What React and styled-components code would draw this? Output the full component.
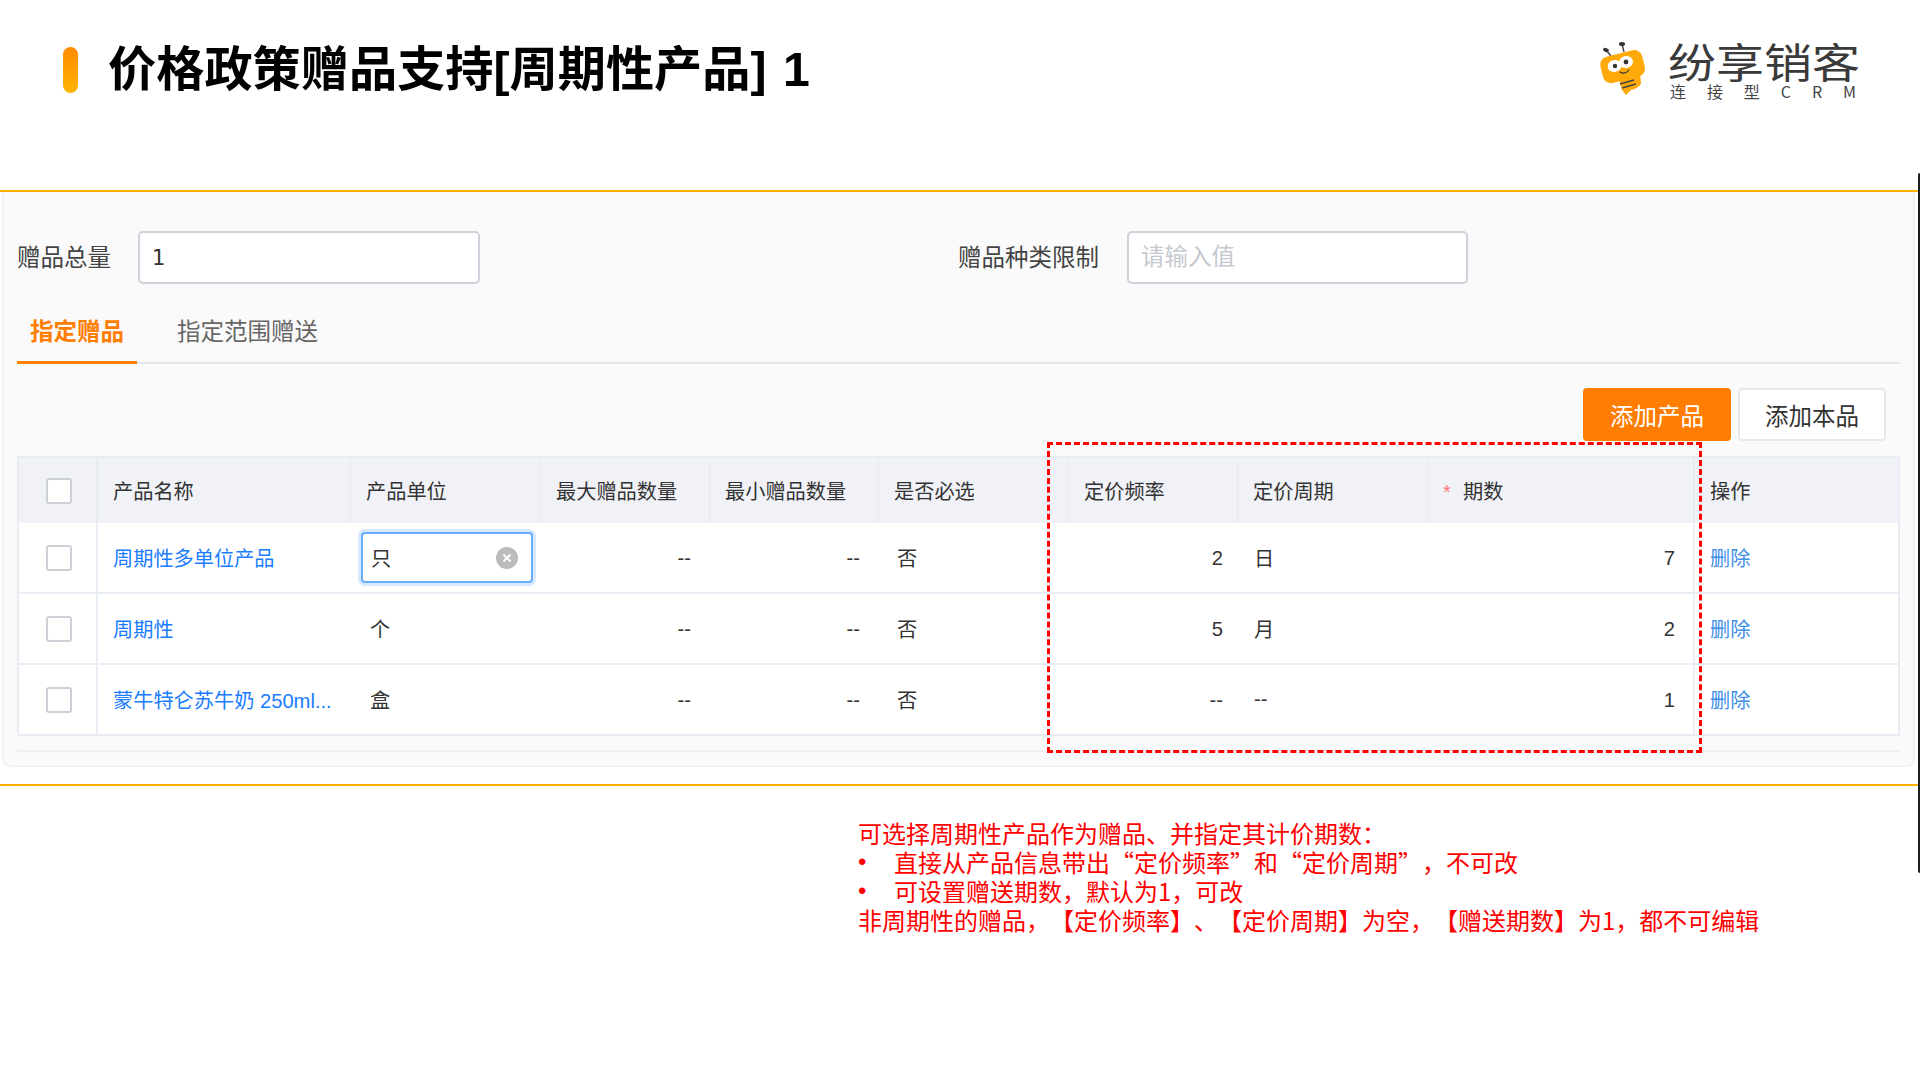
import React from "react";
import styled, { createGlobalStyle } from "styled-components";

const sans = `"Liberation Sans", "Noto Sans CJK SC", sans-serif`;
const cjk = `"Noto Sans CJK SC", "Liberation Sans", sans-serif`;

const Global = createGlobalStyle`
  html, body { margin: 0; padding: 0; background: #fff; }
  * { box-sizing: border-box; }
`;

const Page = styled.div`
  position: relative;
  width: 1920px;
  height: 1080px;
  overflow: hidden;
  background: #fff;
  font-family: ${sans};
  color: #333;
  text-spacing-trim: space-all;
`;

const Header = styled.header`
  height: 190px;
  padding: 43px 62px 0 63px;
  display: flex;
  justify-content: space-between;
  align-items: flex-start;
`;

const TitleGroup = styled.div`
  display: flex;
  align-items: center;
  gap: 30px;
  height: 46px;
  margin-top: 4px;
`;

const Accent = styled.span`
  width: 15px;
  height: 46px;
  border-radius: 8px;
  background: linear-gradient(180deg, #ff8a00 0%, #ffb400 100%);
`;

const Title = styled.h1`
  margin: -2px 0 0;
  font-family: ${sans};
  font-size: 48.2px;
  line-height: 46px;
  font-weight: 700;
  word-spacing: 3px;
  color: #000;
  white-space: nowrap;
`;

const Brand = styled.div`
  display: flex;
  gap: 15px;
`;

const BrandText = styled.div`
  width: 190px;
  margin-top: -3px;
  display: flex;
  flex-direction: column;
`;

const BrandName = styled.div`
  font-family: ${cjk};
  font-size: 41px;
  line-height: 41px;
  height: 41px;
  color: #3a3a3a;
  white-space: nowrap;
  transform: scaleX(1.17);
  transform-origin: left center;
`;

const BrandTag = styled.div`
  display: flex;
  justify-content: space-between;
  margin-top: 2px;
  padding: 0 2px;
  font-family: ${cjk};
  font-size: 16px;
  line-height: 16px;
  color: #444;
`;

const BeeMark = styled.svg`
  width: 60px;
  height: 60px;
  margin-top: -5px;
  flex: none;
`;

const Section = styled.section`
  width: 1918px;
  border-top: 2px solid #ffb000;
  border-bottom: 2px solid #ffb000;
  padding: 0 3px 17px 2px;
`;

const Panel = styled.div`
  background: #fafafa;
  border: 2px solid #f1f1f1;
  border-top: 0;
  border-radius: 0 0 8px 8px;
  padding: 39px 13px 13px;
`;

const FormRow = styled.div`
  display: flex;
  height: 53px;
`;

const Field = styled.div`
  display: flex;
  align-items: center;
  width: ${(p) => p.$width}px;
`;

const FieldLabel = styled.label`
  width: ${(p) => p.$width}px;
  flex: none;
  padding-bottom: 3px;
  font-family: ${cjk};
  font-size: 23.5px;
  color: #444;
  white-space: nowrap;
`;

const TextInput = styled.input`
  width: 342px;
  height: 53px;
  padding: 1px 12px 0;
  background: #fff;
  border: 2px solid #cfd2da;
  border-radius: 5px;
  font-family: "DejaVu Sans", ${cjk};
  font-size: 21px;
  color: #333;
  outline: none;
  &::placeholder {
    font-family: ${cjk};
    font-size: 23.5px;
    color: #c6c9d0;
  }
`;

const Tabs = styled.div`
  display: flex;
  height: 66px;
  margin-top: 14px;
  border-bottom: 2px solid #e5e7ec;
`;

const Tab = styled.div`
  height: 66px;
  margin-bottom: -2px;
  margin-left: ${(p) => (p.$active ? 0 : 27)}px;
  padding: 2px 13px 0;
  line-height: 61px;
  font-family: ${cjk};
  font-size: 23.5px;
  font-weight: ${(p) => (p.$active ? 700 : 400)};
  color: ${(p) => (p.$active ? "#ff7d00" : "#666")};
  border-bottom: 3px solid ${(p) => (p.$active ? "#ff7d00" : "transparent")};
`;

const Actions = styled.div`
  display: flex;
  justify-content: flex-end;
  gap: 7px;
  margin-top: 24px;
  padding-right: 14px;
`;

const Button = styled.button`
  width: 148px;
  height: 53px;
  padding: 0;
  border-radius: 4px;
  border: 2px solid ${(p) => (p.$primary ? "#ff7d00" : "#e6e8ee")};
  background: ${(p) => (p.$primary ? "#ff7d00" : "#fff")};
  color: ${(p) => (p.$primary ? "#fff" : "#333")};
  font-family: ${cjk};
  font-size: 23.5px;
`;

const TableWrap = styled.div`
  margin-top: 15px;
  border: 2px solid #e8ebf2;
`;

const Table = styled.table`
  width: 100%;
  table-layout: fixed;
  border-collapse: separate;
  border-spacing: 0;
  font-size: 20.2px;
  background: #fff;
`;

const Th = styled.th`
  height: 65px;
  padding: 0 0 0 15px;
  background: #f0f2f7;
  font-weight: 400;
  text-align: left;
  color: #333;
  white-space: nowrap;
  border-right: ${(p) => (p.$last ? 0 : p.$strong ? "2px" : "1px")} solid #e7eaf1;
`;

const Td = styled.td`
  height: 71px;
  padding: ${(p) => (p.$right ? `2px ${p.$pad}px 0 0` : `0 0 0 ${p.$pad}px`)};
  text-align: ${(p) => (p.$right ? "right" : "left")};
  color: #333;
  white-space: nowrap;
  border-bottom: 2px solid #e9edf4;
  border-right: ${(p) => (p.$divider ? "2px solid #e9edf4" : 0)};
  tr:last-child > & {
    height: 69px;
    border-bottom: 0;
  }
`;

const Check = styled.span`
  display: block;
  width: 26px;
  height: 26px;
  margin-left: ${(p) => p.$inset}px;
  background: #fff;
  border: 2px solid #cdd0d7;
  border-radius: 3px;
`;

const ProductLink = styled.a`
  color: #1a7cff;
`;

const DeleteLink = styled.a`
  color: #3f8fe8;
`;

const Required = styled.span`
  display: inline-block;
  width: 20px;
  color: #ff7a7a;
  font-size: 20px;
  line-height: 0;
`;

const UnitEditor = styled.div`
  display: flex;
  align-items: center;
  justify-content: space-between;
  width: 172px;
  height: 51px;
  margin: 0 0 0 -6px;
  padding: 0 13px 0 8px;
  background: #fff;
  border: 2px solid #66acff;
  border-radius: 4px;
  box-shadow: 0 0 0 3px #d6e9ff;
`;

const ClearIcon = styled.svg`
  width: 22px;
  height: 22px;
  flex: none;
`;

const Rule = styled.div`
  height: 2px;
  margin-top: 14px;
  background: #f0f0f0;
`;

const Note = styled.div`
  margin: 32px 0 0 858px;
  font-family: ${cjk};
  font-size: 24px;
  line-height: 29px;
  color: #ff0000;
  white-space: nowrap;
`;

const NoteItem = styled.div`
  display: flex;
`;

const Bullet = styled.span`
  width: 36px;
  flex: none;
  font-family: "Liberation Sans", sans-serif;
`;

const Highlight = styled.div`
  position: absolute;
  left: 1047px;
  top: 442px;
  width: 655px;
  height: 311px;
  border: 3px dashed #ff0000;
  pointer-events: none;
`;

const EdgeBar = styled.div`
  position: absolute;
  right: 0;
  top: 173px;
  width: 2px;
  height: 700px;
  background: #1c1c1c;
  border-radius: 2px 0 0 2px;
`;

const Bee = () => (
  <BeeMark viewBox="0 0 60 60">
    <line x1="13" y1="12" x2="18" y2="18" stroke="#444" strokeWidth="1.4" />
    <line x1="29" y1="6" x2="31" y2="14" stroke="#444" strokeWidth="1.4" />
    <ellipse cx="13" cy="12" rx="3" ry="2" fill="#333" transform="rotate(25 13 12)" />
    <ellipse cx="29" cy="6" rx="3" ry="2" fill="#333" />
    <path d="M25 38 L47 34 L48 46 Q44 51 38 52 L33 57 L29 52 Z" fill="#ffa90a" />
    <rect x="8" y="15" width="43" height="27" rx="8" fill="#ffa90a" transform="rotate(-14 30 28)" />
    <ellipse cx="21.5" cy="28" rx="7" ry="6" fill="#fff" transform="rotate(-14 21.5 28)" />
    <ellipse cx="33" cy="24" rx="7" ry="6" fill="#fff" transform="rotate(-14 33 24)" />
    <circle cx="22" cy="28" r="2.2" fill="#333" />
    <circle cx="33" cy="24" r="2.4" fill="#333" />
    <path d="M27 34 Q32 37 36 32" fill="none" stroke="#333" strokeWidth="1.2" strokeLinecap="round" />
    <line x1="27" y1="46" x2="41" y2="42" stroke="#444" strokeWidth="1.5" />
    <line x1="29" y1="50" x2="43" y2="46" stroke="#444" strokeWidth="1.5" />
  </BeeMark>
);

const COLUMNS = [79, 253, 190, 169, 169, 190, 169, 190, 267, 203];

const ROWS = [
  { name: "周期性多单位产品", unit: "只", editing: true, required: "否", freq: "2", period: "日", count: "7" },
  { name: "周期性", unit: "个", required: "否", freq: "5", period: "月", count: "2" },
  { name: "蒙牛特仑苏牛奶 250ml...", unit: "盒", required: "否", freq: "--", period: "--", count: "1" },
];

export default function App() {
  return (
    <Page>
      <Global />
      <Header>
        <TitleGroup>
          <Accent />
          <Title>价格政策赠品支持[周期性产品] 1</Title>
        </TitleGroup>
        <Brand>
          <Bee />
          <BrandText>
            <BrandName>纷享销客</BrandName>
            <BrandTag>
              <span>连</span>
              <span>接</span>
              <span>型</span>
              <span>C</span>
              <span>R</span>
              <span>M</span>
            </BrandTag>
          </BrandText>
        </Brand>
      </Header>

      <Section>
        <Panel>
          <FormRow>
            <Field $width={941}>
              <FieldLabel $width={121}>赠品总量</FieldLabel>
              <TextInput readOnly value="1" />
            </Field>
            <Field $width={510}>
              <FieldLabel $width={169}>赠品种类限制</FieldLabel>
              <TextInput readOnly placeholder="请输入值" />
            </Field>
          </FormRow>

          <Tabs>
            <Tab $active>指定赠品</Tab>
            <Tab>指定范围赠送</Tab>
          </Tabs>

          <Actions>
            <Button $primary>添加产品</Button>
            <Button>添加本品</Button>
          </Actions>

          <TableWrap>
            <Table>
              <colgroup>
                {COLUMNS.map((w, i) => (
                  <col key={i} style={{ width: w }} />
                ))}
              </colgroup>
              <thead>
                <tr>
                  <Th $strong>
                    <Check $inset={12} />
                  </Th>
                  <Th>产品名称</Th>
                  <Th>产品单位</Th>
                  <Th>最大赠品数量</Th>
                  <Th>最小赠品数量</Th>
                  <Th>是否必选</Th>
                  <Th>定价频率</Th>
                  <Th>定价周期</Th>
                  <Th $strong>
                    <Required>*</Required>期数
                  </Th>
                  <Th $last>操作</Th>
                </tr>
              </thead>
              <tbody>
                {ROWS.map((row) => (
                  <tr key={row.name}>
                    <Td $pad={0} $divider>
                      <Check $inset={27} />
                    </Td>
                    <Td $pad={15}>
                      <ProductLink>{row.name}</ProductLink>
                    </Td>
                    <Td $pad={row.editing ? 16 : 19}>
                      {row.editing ? (
                        <UnitEditor>
                          {row.unit}
                          <ClearIcon viewBox="0 0 22 22">
                            <circle cx="11" cy="11" r="11" fill="#bbbbbb" />
                            <path d="M7.5 7.5 L14.5 14.5 M14.5 7.5 L7.5 14.5" stroke="#fff" strokeWidth="2" />
                          </ClearIcon>
                        </UnitEditor>
                      ) : (
                        row.unit
                      )}
                    </Td>
                    <Td $right $pad={19}>--</Td>
                    <Td $right $pad={19}>--</Td>
                    <Td $pad={18}>{row.required}</Td>
                    <Td $right $pad={15}>{row.freq}</Td>
                    <Td $pad={16}>{row.period}</Td>
                    <Td $right $pad={18} $divider>{row.count}</Td>
                    <Td $pad={15}>
                      <DeleteLink>删除</DeleteLink>
                    </Td>
                  </tr>
                ))}
              </tbody>
            </Table>
          </TableWrap>
          <Rule />
        </Panel>
      </Section>

      <Note>
        <div>可选择周期性产品作为赠品、并指定其计价期数：</div>
        <NoteItem>
          <Bullet>•</Bullet>
          <span>直接从产品信息带出“定价频率”和“定价周期”，不可改</span>
        </NoteItem>
        <NoteItem>
          <Bullet>•</Bullet>
          <span>可设置赠送期数，默认为1，可改</span>
        </NoteItem>
        <div>非周期性的赠品，【定价频率】、【定价周期】为空，【赠送期数】为1，都不可编辑</div>
      </Note>

      <Highlight />
      <EdgeBar />
    </Page>
  );
}
